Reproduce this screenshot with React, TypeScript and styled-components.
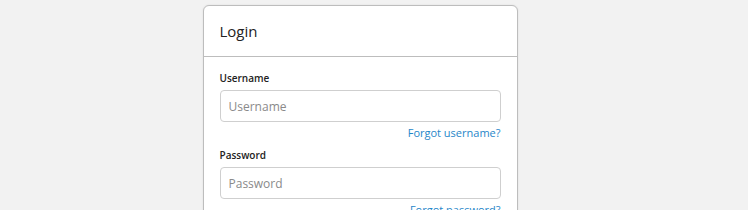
import styled, { createGlobalStyle } from "styled-components";

const GlobalStyle = createGlobalStyle`
  body {
    margin: 0;
    background: #f2f2f2;
    font-family: "Open Sans", "Liberation Sans", sans-serif;
    color: #333;
  }
`;

const Page = styled.div`
  display: flex;
  justify-content: center;
  padding: 5px 0 0 0;
  padding-right: 28px;
`;

const Card = styled.div`
  width: 313px;
  background: #fff;
  border: 1px solid #bdbdbd;
  border-radius: 6px;
  box-shadow: 0 0 2px rgba(0, 0, 0, 0.1);
`;

const Header = styled.div`
  height: 50px;
  display: flex;
  align-items: center;
  padding: 0 16px;
  border-bottom: 1px solid #bdbdbd;
  font-size: 15px;
  font-weight: 500;
  color: #222;
`;

const Body = styled.div`
  padding: 14px 16px 16px 16px;
`;

const Field = styled.div`
  display: flex;
  flex-direction: column;
`;

const Label = styled.label`
  font-size: 10px;
  font-weight: 600;
  color: #222;
  margin-bottom: 4px;
  line-height: 15px;
`;

const Input = styled.input`
  box-sizing: border-box;
  width: 100%;
  height: 32px;
  border: 1px solid #cfcfcf;
  border-radius: 4px;
  padding: 0 8px;
  font-family: inherit;
  font-size: 12px;
  color: #333;
  &::placeholder {
    color: #8a8a8a;
  }
`;

const Forgot = styled.a`
  align-self: flex-end;
  font-size: 11px;
  color: #1f86c9;
  text-decoration: none;
  line-height: 16px;
  margin-top: 3px;
  margin-bottom: 7px;
`;

export default function App() {
  return (
    <>
      <GlobalStyle />
      <Page>
        <Card>
          <Header>Login</Header>
          <Body>
            <Field>
              <Label>Username</Label>
              <Input placeholder="Username" />
              <Forgot href="#">Forgot username?</Forgot>
            </Field>
            <Field>
              <Label>Password</Label>
              <Input type="password" placeholder="Password" />
              <Forgot href="#">Forgot password?</Forgot>
            </Field>
          </Body>
        </Card>
      </Page>
    </>
  );
}
